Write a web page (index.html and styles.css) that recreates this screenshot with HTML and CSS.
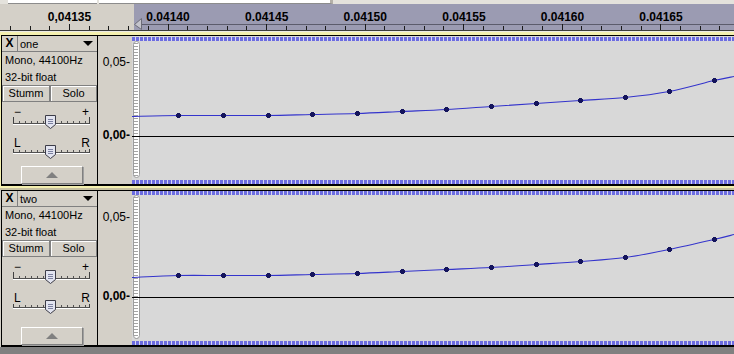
FILE: index.html
```html
<!DOCTYPE html>
<html lang="de">
<head>
    <meta charset="UTF-8">
    <title>Audacity - Spuren</title>
    <link rel="stylesheet" href="styles.css">
</head>
<body>
    <div class="toolstrip">
        <div class="field f1"></div>
        <div class="field f2"></div>
    </div>

    <div class="ruler">
        <svg id="ruler" width="734" height="26">
            <rect x="0" y="0" width="134" height="26" fill="#d4d0c8"/>
            <rect x="134" y="0" width="600" height="26" fill="#9b9bb2"/>
            <line x1="141" y1="20.5" x2="734" y2="20.5" stroke="#5c5c6c"/>
            <polygon points="134.5,20.5 141.5,14.5 141.5,25.5" fill="#c4c4cc" stroke="#6c6c78"/>
            <g class="ruler-labels">
                <text x="69.5" y="17">0,04135</text>
                <text x="168" y="17">0.04140</text>
                <text x="266.7" y="17">0.04145</text>
                <text x="365.3" y="17">0.04150</text>
                <text x="463.9" y="17">0.04155</text>
                <text x="562.5" y="17">0.04160</text>
                <text x="661" y="17">0.04165</text>
            </g>
        </svg>
    </div>

    <div class="tracks">
        <div class="focus">
            <div class="track t1">
                <div class="ctrl">
                    <div class="title">
                        <div class="close">X</div>
                        <div class="name">one <span class="arrow"></span></div>
                    </div>
                    <div class="info">Mono, 44100Hz</div>
                    <div class="info">32-bit float</div>
                    <div class="buttons">
                        <div class="btn stumm">Stumm</div>
                        <div class="btn solo">Solo</div>
                    </div>
                    <div class="slider gain">
                        <div class="labels"><span>&minus;</span><span>+</span></div>
                        <div class="scale">
                            <svg class="thumb" width="11" height="14"><path d="M0.5 0.5 H10.5 V9.5 L5.5 13.5 L0.5 9.5 Z" fill="#e2e4f0" stroke="#3c3c48"/><path d="M3 4.5 H8 M3 6.5 H8 M3 8.5 H8" stroke="#7b80a0"/></svg>
                        </div>
                    </div>
                    <div class="slider pan">
                        <div class="labels"><span>L</span><span>R</span></div>
                        <div class="scale">
                            <svg class="thumb" width="11" height="14"><path d="M0.5 0.5 H10.5 V9.5 L5.5 13.5 L0.5 9.5 Z" fill="#e2e4f0" stroke="#3c3c48"/><path d="M3 4.5 H8 M3 6.5 H8 M3 8.5 H8" stroke="#7b80a0"/></svg>
                        </div>
                    </div>
                    <div class="collapse"><span class="up"></span></div>
                </div>
                <div class="vruler">
                    <div class="v05">0,05-</div>
                    <div class="v00">0,00-</div>
                </div>
                <div class="wave">
                    <div class="dashes"></div>
                    <svg class="plot" id="plot1" width="602" height="139"></svg>
                    <div class="dashes"></div>
                </div>
            </div>
        </div>

        <div class="plain">
            <div class="track t2">
                <div class="ctrl">
                    <div class="title">
                        <div class="close">X</div>
                        <div class="name">two <span class="arrow"></span></div>
                    </div>
                    <div class="info">Mono, 44100Hz</div>
                    <div class="info">32-bit float</div>
                    <div class="buttons">
                        <div class="btn stumm">Stumm</div>
                        <div class="btn solo">Solo</div>
                    </div>
                    <div class="slider gain">
                        <div class="labels"><span>&minus;</span><span>+</span></div>
                        <div class="scale">
                            <svg class="thumb" width="11" height="14"><path d="M0.5 0.5 H10.5 V9.5 L5.5 13.5 L0.5 9.5 Z" fill="#e2e4f0" stroke="#3c3c48"/><path d="M3 4.5 H8 M3 6.5 H8 M3 8.5 H8" stroke="#7b80a0"/></svg>
                        </div>
                    </div>
                    <div class="slider pan">
                        <div class="labels"><span>L</span><span>R</span></div>
                        <div class="scale">
                            <svg class="thumb" width="11" height="14"><path d="M0.5 0.5 H10.5 V9.5 L5.5 13.5 L0.5 9.5 Z" fill="#e2e4f0" stroke="#3c3c48"/><path d="M3 4.5 H8 M3 6.5 H8 M3 8.5 H8" stroke="#7b80a0"/></svg>
                        </div>
                    </div>
                    <div class="collapse"><span class="up"></span></div>
                </div>
                <div class="vruler">
                    <div class="v05">0,05-</div>
                    <div class="v00">0,00-</div>
                </div>
                <div class="wave">
                    <div class="dashes"></div>
                    <svg class="plot" id="plot2" width="602" height="146"></svg>
                    <div class="dashes"></div>
                </div>
            </div>
        </div>
    </div>

    <script>
        const NS = 'http://www.w3.org/2000/svg';
        const xs = [0, 46, 91, 136, 180, 225, 270, 314, 359, 404, 448, 493, 537, 582, 602];
        const spuren = [
            { id: 'plot1', nulllinie: 95, ys: [75, 74, 74, 74, 73, 72, 70, 68, 65, 62, 59, 56, 50, 39, 35] },
            { id: 'plot2', nulllinie: 102, ys: [82, 80, 80, 80, 79, 78, 76, 74, 72, 69, 66, 62, 54, 44, 39] }
        ];

        function el(name, attrs, parent) {
            const node = document.createElementNS(NS, name);
            for (const k in attrs) node.setAttribute(k, attrs[k]);
            parent.appendChild(node);
            return node;
        }

        // catmull-rom -> bezier
        function glatt(pts) {
            let d = 'M' + pts[0][0] + ' ' + pts[0][1];
            for (let i = 0; i < pts.length - 1; i++) {
                const p0 = pts[i - 1] || pts[i];
                const p1 = pts[i];
                const p2 = pts[i + 1];
                const p3 = pts[i + 2] || p2;
                const c1x = p1[0] + (p2[0] - p0[0]) / 6;
                const c1y = p1[1] + (p2[1] - p0[1]) / 6;
                const c2x = p2[0] - (p3[0] - p1[0]) / 6;
                const c2y = p2[1] - (p3[1] - p1[1]) / 6;
                d += ' C' + c1x.toFixed(2) + ' ' + c1y.toFixed(2) + ' ' + c2x.toFixed(2) + ' ' + c2y.toFixed(2) + ' ' + p2[0] + ' ' + p2[1];
            }
            return d;
        }

        spuren.forEach((spur, n) => {
            const svg = document.getElementById(spur.id);
            const h = +svg.getAttribute('height');
            const defs = el('defs', {}, svg);
            const pat = el('pattern', { id: 'striche' + n, width: 7, height: 3, patternUnits: 'userSpaceOnUse' }, defs);
            el('rect', { width: 7, height: 3, fill: '#ffffff' }, pat);
            el('rect', { x: 1, y: 2, width: 5, height: 1, fill: '#a4a4a4' }, pat);

            el('rect', { x: 1.5, y: 0.5, width: 6, height: h - 3, rx: 3, fill: 'url(#striche' + n + ')', stroke: '#9c9c9c' }, svg);
            el('rect', { x: 0, y: spur.nulllinie, width: 602, height: 1, fill: '#000' }, svg);

            const pts = xs.map((x, i) => [x, spur.ys[i] + 0.5]);
            el('path', { d: glatt(pts), fill: 'none', stroke: '#3434cc', 'stroke-width': 1.1 }, svg);

            for (let i = 1; i < xs.length - 1; i++) {
                const x = xs[i], y = spur.ys[i];
                el('path', {
                    d: 'M' + (x - 2) + ' ' + (y - 1) + 'h5v3h-5z M' + (x - 1) + ' ' + (y - 2) + 'h3v5h-3z',
                    fill: '#14145c'
                }, svg);
            }
        });

        // Lineal-Striche
        const ruler = document.getElementById('ruler');
        const labels = ruler.querySelector('.ruler-labels');
        for (let k = -3; k < 35; k++) {
            const x = Math.floor(69.5 + k * 19.71) + 0.5;
            if (x < 0 || x > 734) continue;
            const gross = k % 5 === 0;
            el('line', { x1: x, y1: gross ? 20 : 22, x2: x, y2: 26, stroke: '#1c1c1c' }, ruler).parentNode.insertBefore(ruler.lastChild, labels);
        }
    </script>
</body>
</html>
```

FILE: styles.css
```css
* {
    box-sizing: border-box;
}
body {
    margin: 0;
    width: 734px;
    height: 354px;
    overflow: hidden;
    background-color: #808080;
    font-family: 'Liberation Sans', Arial, sans-serif;
    font-size: 11px;
    color: #000;
}

/* reste der werkzeugleiste oben */
.toolstrip {
    display: flex;
    height: 4px;
    padding-left: 8px;
    background-color: #e4e2dc;
}
.toolstrip .field {
    height: 4px;
    background-color: #fff;
    border-bottom: 1px solid #8c8c8c;
}
.field.f1 {
    width: 89px;
}
.field.f2 {
    width: 234px;
    margin-left: 2px;
    border-right: 3px solid #b4b0a8;
}

.ruler {
    height: 27px;
    border-bottom: 1px solid #3c3c3c;
}
.ruler svg {
    display: block;
}
.ruler-labels text {
    font-family: 'Liberation Sans', Arial, sans-serif;
    font-weight: bold;
    font-size: 12px;
    text-anchor: middle;
    fill: #000;
}

.tracks {
    border-top: 1px solid #ecebe6;
}
.focus {
    padding: 3px 0 4px 1px;
    background: linear-gradient(to bottom, #f4f0b0 calc(100% - 2px), #c6c0a0 calc(100% - 2px));
}
.plain {
    padding-left: 1px;
    background-color: #d4d0c8;
}
.track {
    display: flex;
    border-top: 1px solid #000;
    border-left: 1px solid #000;
    border-bottom: 2px solid #000;
}
.t1 {
    height: 151px;
}
.t2 {
    height: 157px;
}

/* spurkopf */
.ctrl {
    width: 96px;
    display: flex;
    flex-direction: column;
    background-color: #d4d0c8;
    border-right: 1px solid #000;
}
.title {
    display: flex;
    height: 16px;
    border-bottom: 1px solid #808080;
}
.close {
    width: 16px;
    border-right: 1px solid #808080;
    font-size: 12px;
    font-weight: bold;
    line-height: 15px;
    text-align: center;
}
.name {
    flex: 1;
    display: flex;
    align-items: center;
    justify-content: space-between;
    padding: 0 4px 0 2px;
    background-color: #d4d0c8;
}
.arrow {
    width: 0;
    height: 0;
    border-left: 5px solid transparent;
    border-right: 5px solid transparent;
    border-top: 5px solid #000;
}
.info {
    padding-left: 3px;
    line-height: 17px;
}
.info + .info {
    line-height: 16px;
}
.buttons {
    display: flex;
    height: 17px;
}
.btn {
    border: 1px solid #808080;
    box-shadow: inset 1px 1px 0 #fff;
    line-height: 15px;
    text-align: center;
}
.btn.stumm {
    width: 48px;
}
.btn.solo {
    flex: 1;
}

.slider {
    margin: 0 7px 0 11px;
}
.slider .labels {
    display: flex;
    justify-content: space-between;
    padding: 0 1px 0 1px;
}
.gain {
    margin-top: 6px;
}
.gain .labels {
    height: 9px;
    line-height: 9px;
    font-size: 12px;
}
.pan {
    margin-top: 14px;
}
.pan .labels {
    height: 11px;
    line-height: 11px;
    font-size: 12px;
    padding: 0 0 0 1px;
}
.scale {
    position: relative;
    border-left: 1px solid #404040;
    border-right: 1px solid #404040;
    border-bottom: 1px solid #505050;
    box-shadow: 0 1px 0 #fff;
    background: repeating-linear-gradient(to right, transparent 0 5px, #505050 5px 6px) bottom / 100% 2px no-repeat;
}
.gain .scale {
    height: 7px;
}
.pan .scale {
    height: 4px;
}
.thumb {
    position: absolute;
    left: 31px;
    display: block;
}
.gain .thumb {
    top: -2px;
}
.pan .thumb {
    top: -4px;
}

.collapse {
    display: flex;
    align-items: center;
    justify-content: center;
    height: 18px;
    margin: auto 14px 0 19px;
    border: 1px solid;
    border-color: #fff #808080 #808080 #fff;
    box-shadow: 1px 1px 0 #a0a0a0;
}
.up {
    width: 0;
    height: 0;
    border-left: 6px solid transparent;
    border-right: 6px solid transparent;
    border-bottom: 6px solid #808080;
}

/* vertikales lineal */
.vruler {
    width: 34px;
    padding-right: 2px;
    background-color: #d4d0c8;
    font-size: 12px;
    line-height: 14px;
    text-align: right;
}
.v05 {
    margin-top: 19px;
}
.v00 {
    margin-top: 59px;
    font-weight: bold;
}
.t2 .v00 {
    margin-top: 65px;
}

/* wellenform */
.wave {
    flex: 1;
    display: flex;
    flex-direction: column;
    background-color: #d8d8d8;
}
.t1 .wave {
    padding-top: 1px;
}
.dashes {
    height: 4px;
    background: repeating-linear-gradient(to right, #6c6ce0 0 3px, #d6d6f0 3px 4px);
}
.plot {
    display: block;
}
```
